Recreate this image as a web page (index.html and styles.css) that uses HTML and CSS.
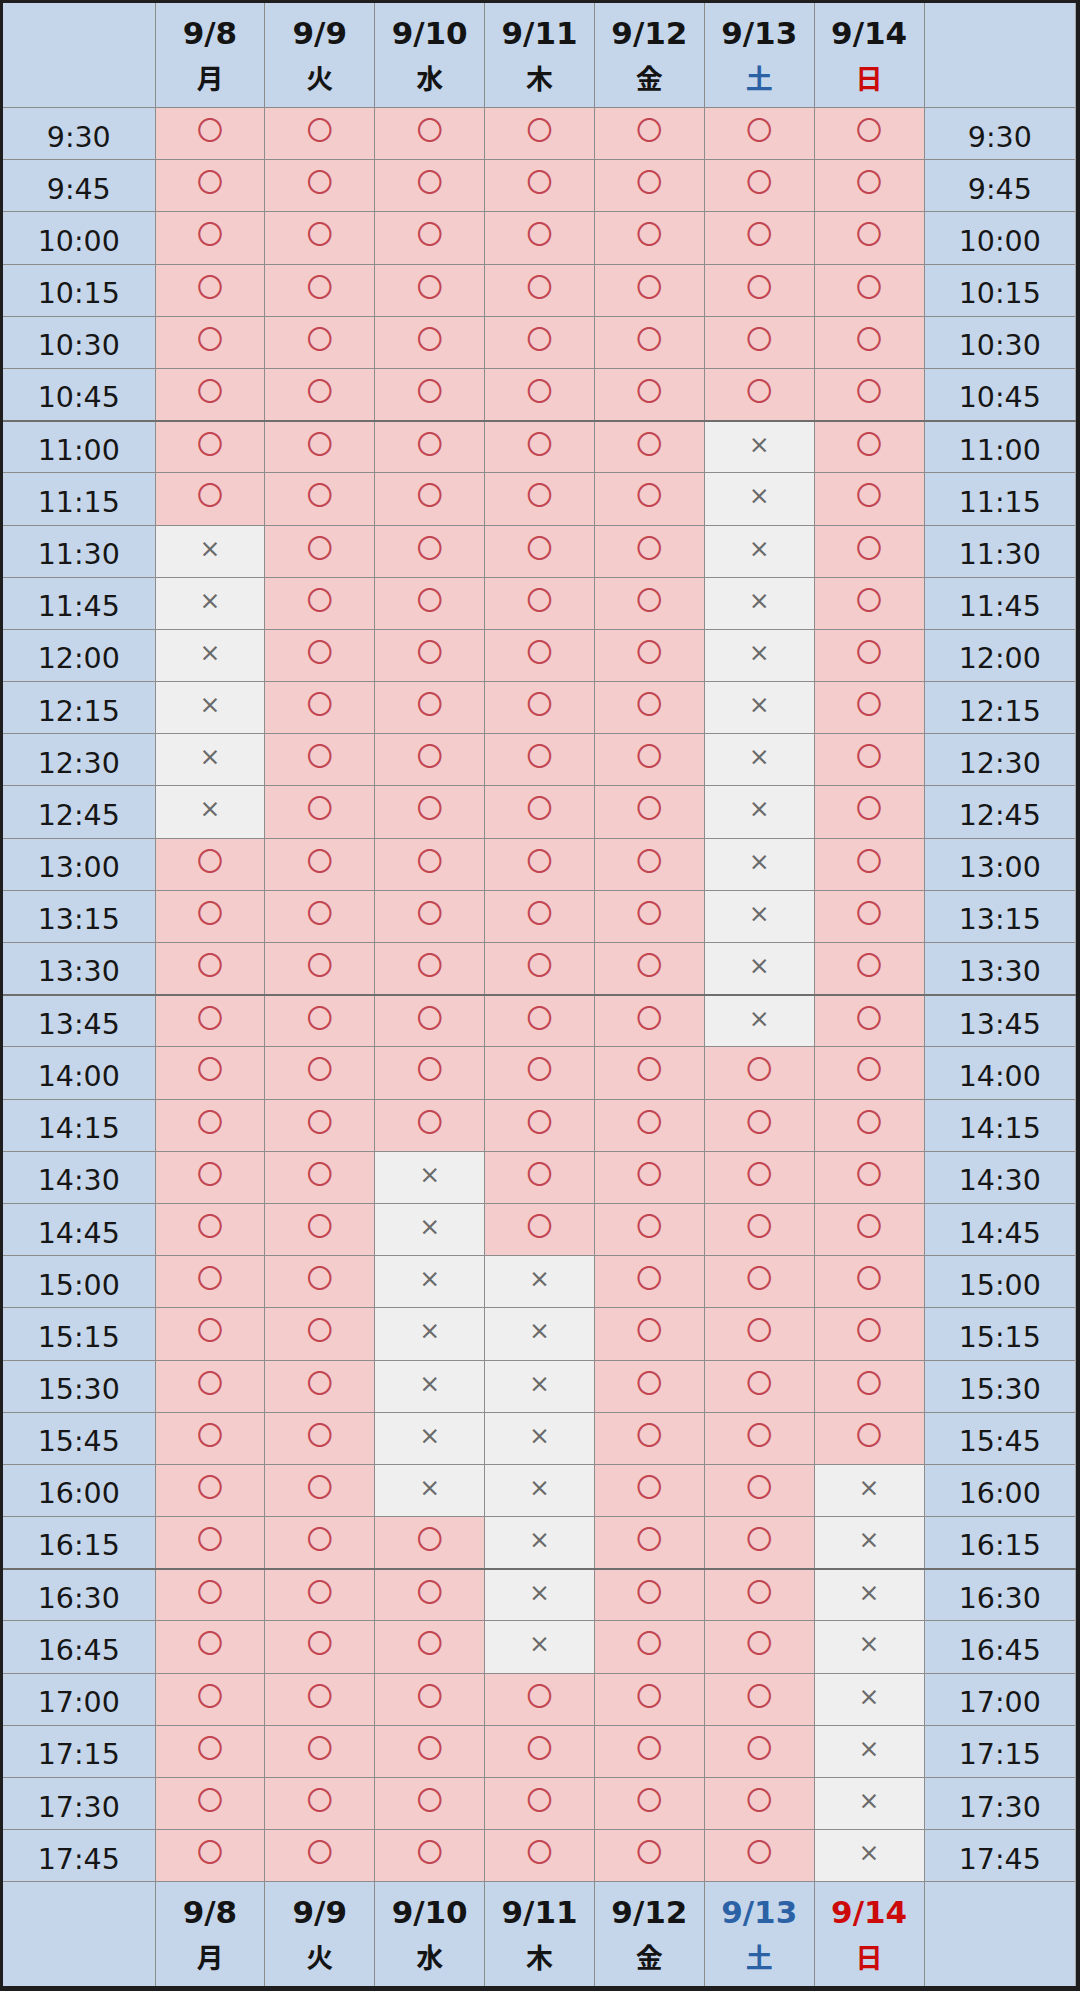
FILE: index.html
```html
<!DOCTYPE html>
<html lang="ja">
<head>
<meta charset="utf-8">
<title>予約状況</title>
<link rel="stylesheet" href="styles.css">
</head>
<body>
<div class="frame">
<table class="sched">
<colgroup><col class="ct"><col class="cd"><col class="cd"><col class="cd"><col class="cd"><col class="cd"><col class="cd"><col class="cd"><col class="ct"></colgroup>
<thead>
<tr class="hd">
<th></th>
<th><span class="dt">9/8</span><span class="wd">月</span></th>
<th><span class="dt">9/9</span><span class="wd">火</span></th>
<th><span class="dt">9/10</span><span class="wd">水</span></th>
<th><span class="dt">9/11</span><span class="wd">木</span></th>
<th><span class="dt">9/12</span><span class="wd">金</span></th>
<th><span class="dt">9/13</span><span class="wd sat">土</span></th>
<th><span class="dt">9/14</span><span class="wd sun">日</span></th>
<th></th>
</tr>
</thead>
<tbody>
<tr><td class="t">9:30</td><td class="o">〇</td><td class="o">〇</td><td class="o">〇</td><td class="o">〇</td><td class="o">〇</td><td class="o">〇</td><td class="o">〇</td><td class="t">9:30</td></tr>
<tr><td class="t">9:45</td><td class="o">〇</td><td class="o">〇</td><td class="o">〇</td><td class="o">〇</td><td class="o">〇</td><td class="o">〇</td><td class="o">〇</td><td class="t">9:45</td></tr>
<tr><td class="t">10:00</td><td class="o">〇</td><td class="o">〇</td><td class="o">〇</td><td class="o">〇</td><td class="o">〇</td><td class="o">〇</td><td class="o">〇</td><td class="t">10:00</td></tr>
<tr><td class="t">10:15</td><td class="o">〇</td><td class="o">〇</td><td class="o">〇</td><td class="o">〇</td><td class="o">〇</td><td class="o">〇</td><td class="o">〇</td><td class="t">10:15</td></tr>
<tr><td class="t">10:30</td><td class="o">〇</td><td class="o">〇</td><td class="o">〇</td><td class="o">〇</td><td class="o">〇</td><td class="o">〇</td><td class="o">〇</td><td class="t">10:30</td></tr>
<tr class="sep"><td class="t">10:45</td><td class="o">〇</td><td class="o">〇</td><td class="o">〇</td><td class="o">〇</td><td class="o">〇</td><td class="o">〇</td><td class="o">〇</td><td class="t">10:45</td></tr>
<tr><td class="t">11:00</td><td class="o">〇</td><td class="o">〇</td><td class="o">〇</td><td class="o">〇</td><td class="o">〇</td><td class="x">×</td><td class="o">〇</td><td class="t">11:00</td></tr>
<tr><td class="t">11:15</td><td class="o">〇</td><td class="o">〇</td><td class="o">〇</td><td class="o">〇</td><td class="o">〇</td><td class="x">×</td><td class="o">〇</td><td class="t">11:15</td></tr>
<tr><td class="t">11:30</td><td class="x">×</td><td class="o">〇</td><td class="o">〇</td><td class="o">〇</td><td class="o">〇</td><td class="x">×</td><td class="o">〇</td><td class="t">11:30</td></tr>
<tr><td class="t">11:45</td><td class="x">×</td><td class="o">〇</td><td class="o">〇</td><td class="o">〇</td><td class="o">〇</td><td class="x">×</td><td class="o">〇</td><td class="t">11:45</td></tr>
<tr><td class="t">12:00</td><td class="x">×</td><td class="o">〇</td><td class="o">〇</td><td class="o">〇</td><td class="o">〇</td><td class="x">×</td><td class="o">〇</td><td class="t">12:00</td></tr>
<tr><td class="t">12:15</td><td class="x">×</td><td class="o">〇</td><td class="o">〇</td><td class="o">〇</td><td class="o">〇</td><td class="x">×</td><td class="o">〇</td><td class="t">12:15</td></tr>
<tr><td class="t">12:30</td><td class="x">×</td><td class="o">〇</td><td class="o">〇</td><td class="o">〇</td><td class="o">〇</td><td class="x">×</td><td class="o">〇</td><td class="t">12:30</td></tr>
<tr><td class="t">12:45</td><td class="x">×</td><td class="o">〇</td><td class="o">〇</td><td class="o">〇</td><td class="o">〇</td><td class="x">×</td><td class="o">〇</td><td class="t">12:45</td></tr>
<tr><td class="t">13:00</td><td class="o">〇</td><td class="o">〇</td><td class="o">〇</td><td class="o">〇</td><td class="o">〇</td><td class="x">×</td><td class="o">〇</td><td class="t">13:00</td></tr>
<tr><td class="t">13:15</td><td class="o">〇</td><td class="o">〇</td><td class="o">〇</td><td class="o">〇</td><td class="o">〇</td><td class="x">×</td><td class="o">〇</td><td class="t">13:15</td></tr>
<tr class="sep"><td class="t">13:30</td><td class="o">〇</td><td class="o">〇</td><td class="o">〇</td><td class="o">〇</td><td class="o">〇</td><td class="x">×</td><td class="o">〇</td><td class="t">13:30</td></tr>
<tr><td class="t">13:45</td><td class="o">〇</td><td class="o">〇</td><td class="o">〇</td><td class="o">〇</td><td class="o">〇</td><td class="x">×</td><td class="o">〇</td><td class="t">13:45</td></tr>
<tr><td class="t">14:00</td><td class="o">〇</td><td class="o">〇</td><td class="o">〇</td><td class="o">〇</td><td class="o">〇</td><td class="o">〇</td><td class="o">〇</td><td class="t">14:00</td></tr>
<tr><td class="t">14:15</td><td class="o">〇</td><td class="o">〇</td><td class="o">〇</td><td class="o">〇</td><td class="o">〇</td><td class="o">〇</td><td class="o">〇</td><td class="t">14:15</td></tr>
<tr><td class="t">14:30</td><td class="o">〇</td><td class="o">〇</td><td class="x">×</td><td class="o">〇</td><td class="o">〇</td><td class="o">〇</td><td class="o">〇</td><td class="t">14:30</td></tr>
<tr><td class="t">14:45</td><td class="o">〇</td><td class="o">〇</td><td class="x">×</td><td class="o">〇</td><td class="o">〇</td><td class="o">〇</td><td class="o">〇</td><td class="t">14:45</td></tr>
<tr><td class="t">15:00</td><td class="o">〇</td><td class="o">〇</td><td class="x">×</td><td class="x">×</td><td class="o">〇</td><td class="o">〇</td><td class="o">〇</td><td class="t">15:00</td></tr>
<tr><td class="t">15:15</td><td class="o">〇</td><td class="o">〇</td><td class="x">×</td><td class="x">×</td><td class="o">〇</td><td class="o">〇</td><td class="o">〇</td><td class="t">15:15</td></tr>
<tr><td class="t">15:30</td><td class="o">〇</td><td class="o">〇</td><td class="x">×</td><td class="x">×</td><td class="o">〇</td><td class="o">〇</td><td class="o">〇</td><td class="t">15:30</td></tr>
<tr><td class="t">15:45</td><td class="o">〇</td><td class="o">〇</td><td class="x">×</td><td class="x">×</td><td class="o">〇</td><td class="o">〇</td><td class="o">〇</td><td class="t">15:45</td></tr>
<tr><td class="t">16:00</td><td class="o">〇</td><td class="o">〇</td><td class="x">×</td><td class="x">×</td><td class="o">〇</td><td class="o">〇</td><td class="x">×</td><td class="t">16:00</td></tr>
<tr class="sep"><td class="t">16:15</td><td class="o">〇</td><td class="o">〇</td><td class="o">〇</td><td class="x">×</td><td class="o">〇</td><td class="o">〇</td><td class="x">×</td><td class="t">16:15</td></tr>
<tr><td class="t">16:30</td><td class="o">〇</td><td class="o">〇</td><td class="o">〇</td><td class="x">×</td><td class="o">〇</td><td class="o">〇</td><td class="x">×</td><td class="t">16:30</td></tr>
<tr><td class="t">16:45</td><td class="o">〇</td><td class="o">〇</td><td class="o">〇</td><td class="x">×</td><td class="o">〇</td><td class="o">〇</td><td class="x">×</td><td class="t">16:45</td></tr>
<tr><td class="t">17:00</td><td class="o">〇</td><td class="o">〇</td><td class="o">〇</td><td class="o">〇</td><td class="o">〇</td><td class="o">〇</td><td class="x">×</td><td class="t">17:00</td></tr>
<tr><td class="t">17:15</td><td class="o">〇</td><td class="o">〇</td><td class="o">〇</td><td class="o">〇</td><td class="o">〇</td><td class="o">〇</td><td class="x">×</td><td class="t">17:15</td></tr>
<tr><td class="t">17:30</td><td class="o">〇</td><td class="o">〇</td><td class="o">〇</td><td class="o">〇</td><td class="o">〇</td><td class="o">〇</td><td class="x">×</td><td class="t">17:30</td></tr>
<tr><td class="t">17:45</td><td class="o">〇</td><td class="o">〇</td><td class="o">〇</td><td class="o">〇</td><td class="o">〇</td><td class="o">〇</td><td class="x">×</td><td class="t">17:45</td></tr>
</tbody>
<tfoot>
<tr class="hd">
<th></th>
<th><span class="dt">9/8</span><span class="wd">月</span></th>
<th><span class="dt">9/9</span><span class="wd">火</span></th>
<th><span class="dt">9/10</span><span class="wd">水</span></th>
<th><span class="dt">9/11</span><span class="wd">木</span></th>
<th><span class="dt">9/12</span><span class="wd">金</span></th>
<th><span class="dt sat">9/13</span><span class="wd sat">土</span></th>
<th><span class="dt sun">9/14</span><span class="wd sun">日</span></th>
<th></th>
</tr>
</tfoot>
</table>
</div>
</body>
</html>
```

FILE: styles.css
```css
html, body {
  margin: 0;
  padding: 0;
  background: #ffffff;
}

.frame {
  width: 1080px;
  height: 1991px;
  box-sizing: border-box;
  border-style: solid;
  border-color: #1e1e1e;
  border-width: 3px 4px 5px 3px;
  background: #c6d6ea;
  overflow: hidden;
}

.sched {
  width: 1073px;
  border-collapse: collapse;
  table-layout: fixed;
  font-family: "DejaVu Sans", "Noto Sans CJK JP", sans-serif;
  color: #1a1a1a;
}

.ct { width: 152px; }
.cd { width: 109.86px; }

.sched th,
.sched td {
  border: 1px solid #8c8c8c;
  padding: 0;
  text-align: center;
}

.sched tr > :first-child { border-left: none; }
.sched tr > :last-child { border-right: 2px solid #a6a6a6; }
.sched thead tr > * { border-top: none; }
.sched tfoot tr > * { border-bottom: 2px solid #a6a6a6; }

.sched .hd > th {
  height: 104px;
  background: #c6d6ea;
  vertical-align: middle;
}

.dt {
  display: block;
  font-family: "DejaVu Sans", sans-serif;
  font-weight: bold;
  font-size: 31px;
  line-height: 46px;
  color: #141414;
}

.wd {
  display: block;
  font-family: "Noto Sans CJK JP", sans-serif;
  font-weight: bold;
  font-size: 27px;
  line-height: 44px;
  color: #141414;
}

.sched .sat { color: #2b62a6; }
.sched .sun { color: #cc0a0a; }

.sched tbody tr { height: 52.2px; }

.sched td.t {
  background: #c6d6ea;
  font-size: 28.5px;
  line-height: 32px;
  padding-top: 8px;
  vertical-align: middle;
  color: #161616;
}

.sched td.o,
.sched td.x {
  vertical-align: top;
}

.sched td.o {
  background: #f4cccc;
  color: #c24652;
  font-family: "Noto Sans CJK JP", sans-serif;
  font-size: 26px;
  line-height: 30px;
  padding-top: 6px;
}

.sched td.x {
  background: #efefef;
  color: #6a6a6a;
  font-family: "DejaVu Sans", sans-serif;
  font-size: 25px;
  line-height: 30px;
  padding-top: 8px;
}

.sched .sep > td {
  border-bottom: 2px solid #6e6e6e;
}
```
